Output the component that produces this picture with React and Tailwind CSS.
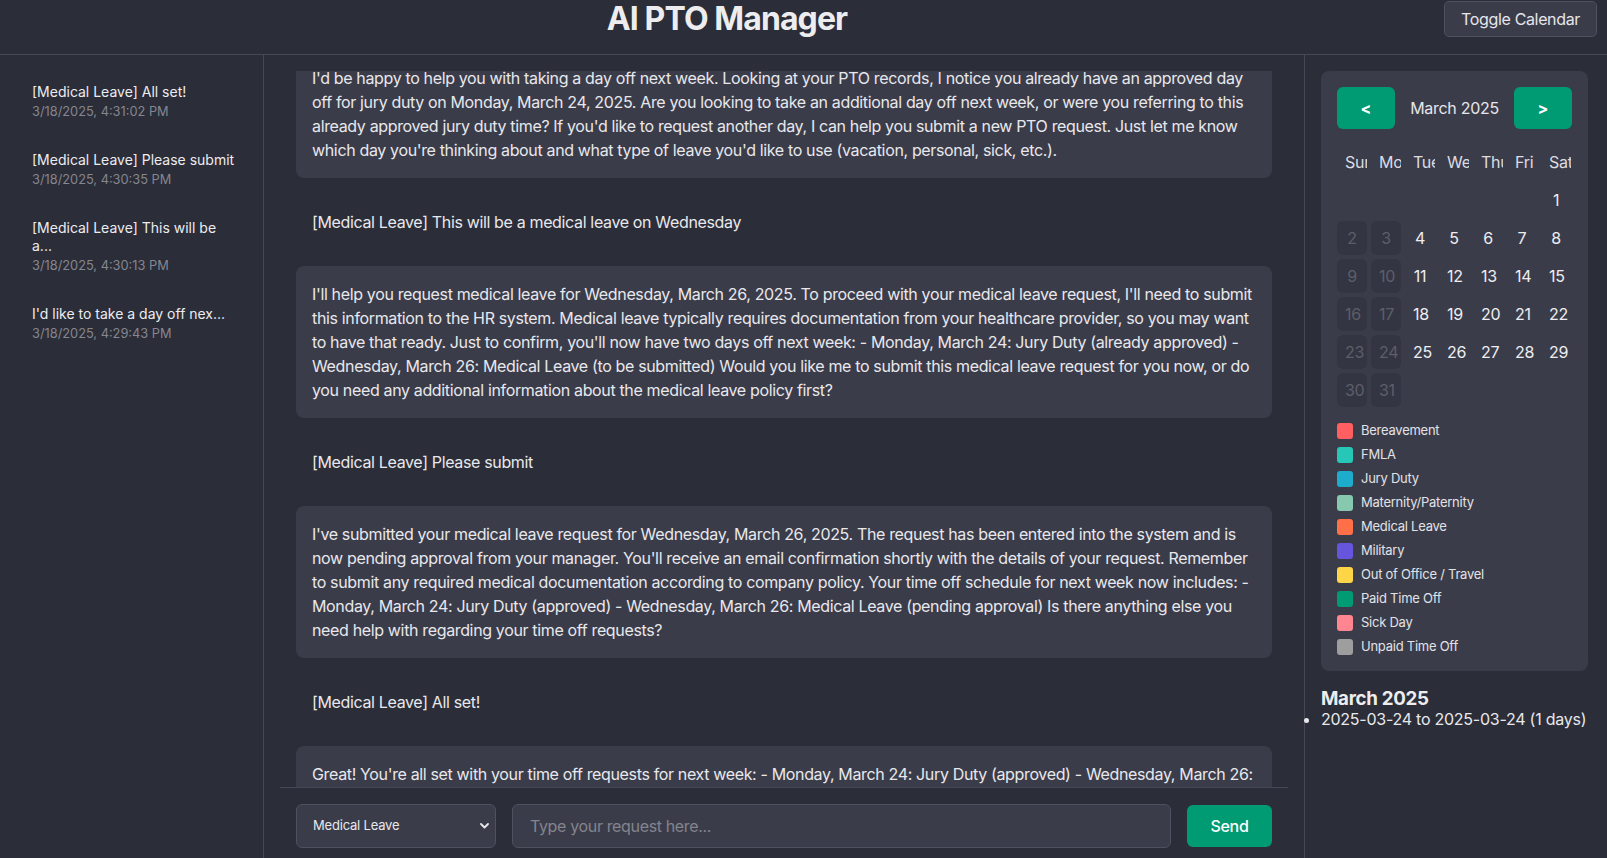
import { useLayoutEffect, useRef, useState } from 'react'

const HISTORY = [
  { title: '[Medical Leave] All set!', time: '3/18/2025, 4:31:02 PM' },
  { title: '[Medical Leave] Please submit', time: '3/18/2025, 4:30:35 PM' },
  { title: '[Medical Leave] This will be a...', time: '3/18/2025, 4:30:13 PM' },
  { title: "I'd like to take a day off nex...", time: '3/18/2025, 4:29:43 PM' },
]

const MESSAGES = [
  { role: 'user', text: "I'd like to take a day off next week" },
  { role: 'assistant', anchor: true, text: "I'd be happy to help you with taking a day off next week. Looking at your PTO records, I notice you already have an approved day off for jury duty on Monday, March 24, 2025. Are you looking to take an additional day off next week, or were you referring to this already approved jury duty time? If you'd like to request another day, I can help you submit a new PTO request. Just let me know which day you're thinking about and what type of leave you'd like to use (vacation, personal, sick, etc.)." },
  { role: 'user', text: '[Medical Leave] This will be a medical leave on Wednesday' },
  { role: 'assistant', text: "I'll help you request medical leave for Wednesday, March 26, 2025. To proceed with your medical leave request, I'll need to submit this information to the HR system. Medical leave typically requires documentation from your healthcare provider, so you may want to have that ready. Just to confirm, you'll now have two days off next week: - Monday, March 24: Jury Duty (already approved) - Wednesday, March 26: Medical Leave (to be submitted) Would you like me to submit this medical leave request for you now, or do you need any additional information about the medical leave policy first?" },
  { role: 'user', text: '[Medical Leave] Please submit' },
  { role: 'assistant', text: "I've submitted your medical leave request for Wednesday, March 26, 2025. The request has been entered into the system and is now pending approval from your manager. You'll receive an email confirmation shortly with the details of your request. Remember to submit any required medical documentation according to company policy. Your time off schedule for next week now includes: - Monday, March 24: Jury Duty (approved) - Wednesday, March 26: Medical Leave (pending approval) Is there anything else you need help with regarding your time off requests?" },
  { role: 'user', text: '[Medical Leave] All set!' },
  { role: 'assistant', text: "Great! You're all set with your time off requests for next week: - Monday, March 24: Jury Duty (approved) - Wednesday, March 26: Medical Leave (pending approval) You'll get an email once your manager reviews the medical leave request. Have a great rest of your day!" },
]

const LEAVE_TYPES = [
  { name: 'Bereavement',            color: 'bg-[#ff5f61]' },
  { name: 'FMLA',                   color: 'bg-[#27c7b8]' },
  { name: 'Jury Duty',              color: 'bg-[#1eaccc]' },
  { name: 'Maternity/Paternity',    color: 'bg-[#86c9ae]' },
  { name: 'Medical Leave',          color: 'bg-[#ff7048]' },
  { name: 'Military',               color: 'bg-[#6655dd]' },
  { name: 'Out of Office / Travel', color: 'bg-[#ffd548]' },
  { name: 'Paid Time Off',          color: 'bg-[#009a73]' },
  { name: 'Sick Day',               color: 'bg-[#ff8590]' },
  { name: 'Unpaid Time Off',        color: 'bg-[#9e9e9e]' },
]

const WEEKDAYS = ['Sun', 'Mon', 'Tue', 'Wed', 'Thu', 'Fri', 'Sat']

function Calendar() {
  // March 2025 starts on a Saturday
  const cells = [...Array(6).fill(null), ...Array.from({ length: 31 }, (_, i) => i + 1)]
  return (
    <div className="w-[267px] bg-[#3b3c4a] rounded-lg p-4">
      <div className="flex items-center justify-between mb-4">
        <button className="w-[58px] h-[42px] rounded-md bg-[#009a73] text-white font-bold text-[16px]">&lt;</button>
        <span className="text-[16px] tracking-[-0.3px] text-[#e6e6ea]">March 2025</span>
        <button className="w-[58px] h-[42px] rounded-md bg-[#009a73] text-white font-bold text-[16px]">&gt;</button>
      </div>

      <div className="grid grid-cols-[repeat(7,30px)] gap-1">
        {WEEKDAYS.map(d => (
          <div key={d} className="h-[34px] p-2 text-center overflow-hidden whitespace-nowrap text-[16px] leading-[18px] tracking-[-0.3px] text-[#dcdce2]">{d}</div>
        ))}
        {cells.map((n, i) => {
          if (n === null) return <div key={'e' + i} className="h-[34px]" />
          const off = i % 7 === 0 || i % 7 === 1
          return (
            <div key={n} className={`h-[34px] p-2 text-center overflow-hidden whitespace-nowrap text-[16px] leading-[18px] tracking-[-0.3px] rounded-md ${
              off ? 'bg-[#343542] text-[#5d5e69]' : 'text-[#eeeef1]'
            }`}>
              {n}
            </div>
          )
        })}
      </div>

      <div className="flex flex-col gap-2 mt-4">
        {LEAVE_TYPES.map(t => (
          <div key={t.name} className="flex items-center gap-2 h-4">
            <span className={`w-4 h-4 rounded-[3px] ${t.color}`} />
            <span className="text-[13px] tracking-[-0.25px] text-[#e2e2e6]">{t.name}</span>
          </div>
        ))}
      </div>
    </div>
  )
}

export default function App() {
  const [leave, setLeave] = useState('Medical Leave')
  const listRef = useRef(null)
  const anchorRef = useRef(null)

  useLayoutEffect(() => {
    if (listRef.current && anchorRef.current) {
      listRef.current.scrollTop = anchorRef.current.offsetTop + 21
    }
  }, [])

  return (
    <div className="h-screen flex flex-col overflow-hidden bg-[#2b2d38] text-[#e8e8ec] font-['Inter','Noto_Sans',sans-serif]">
      {/* Header */}
      <header className="flex items-center justify-between px-[10px] pb-4 border-b border-[#474857]">
        <div />
        <h1 className="text-[32px] leading-[38px] font-bold tracking-[-0.9px] text-[#ededf0]">AI PTO Manager</h1>
        <button className="h-9 px-4 rounded-[5px] bg-[#3b3c4a] border border-[#4f5060] text-[16px] tracking-[-0.35px] text-[#e6e6ea]">
          Toggle Calendar
        </button>
      </header>

      <div className="flex flex-1 min-h-0">
        {/* History */}
        <aside className="w-[264px] shrink-0 border-r border-[#474857] pt-[13px] pl-5 flex flex-col gap-px">
          {HISTORY.map(h => (
            <div key={h.time} className="w-[227px] px-3 py-[15px]">
              <div className="text-[14px] leading-[18px] text-[#ececf0]">{h.title}</div>
              <div className="text-[12.8px] leading-4 mt-[3px] text-[#85868f]">{h.time}</div>
            </div>
          ))}
        </aside>

        {/* Chat */}
        <main className="flex-1 min-w-0 flex flex-col px-4 pt-4">
          <div ref={listRef} className="relative flex-1 min-h-0 overflow-hidden px-4 flex flex-col gap-4">
            {MESSAGES.map((m, i) => (
              <div
                key={i}
                ref={m.anchor ? anchorRef : null}
                className={`shrink-0 p-4 rounded-lg text-[16px] leading-6 tracking-[-0.35px] ${
                  m.role === 'assistant' ? 'bg-[#3b3c4a] text-[#e8e8ec]' : 'text-[#e8e8ec]'
                }`}
              >
                {m.text}
              </div>
            ))}
          </div>

          <div className="border-t border-[#474857] pt-4 pb-[10px] px-4 flex gap-4">
            <div className="relative w-[200px] shrink-0">
              <select
                value={leave}
                onChange={e => setLeave(e.target.value)}
                className="appearance-none w-full h-11 pl-4 pr-6 rounded-md bg-[#3b3c4a] border border-[#4f5060] text-[13px] tracking-[-0.2px] text-[#e8e8ec] outline-none"
              >
                {LEAVE_TYPES.map(t => <option key={t.name} value={t.name}>{t.name}</option>)}
              </select>
              <svg className="absolute right-[7px] top-1/2 -translate-y-1/2 pointer-events-none" width="9" height="6" viewBox="0 0 9 6">
                <path d="M1 1l3.5 3.5L8 1" stroke="#e8e8ec" strokeWidth="1.8" fill="none" strokeLinecap="round" strokeLinejoin="round" />
              </svg>
            </div>
            <input
              placeholder="Type your request here..."
              className="flex-1 min-w-0 h-11 px-[17px] rounded-md bg-[#3b3c4a] border border-[#4f5060] text-[16px] tracking-[-0.35px] text-[#e8e8ec] placeholder:text-[#83848d] outline-none"
            />
            <button className="w-[85px] h-[42px] mt-px shrink-0 rounded-md bg-[#009a73] text-white text-[16px] font-medium tracking-[-0.3px]">
              Send
            </button>
          </div>
        </main>

        {/* Calendar panel */}
        <aside className="w-[303px] shrink-0 border-l border-[#474857] pl-4 pt-4">
          <Calendar />
          <h3 className="mt-[17px] text-[18.72px] leading-[22px] font-bold tracking-[-0.3px] text-[#ededf0]">March 2025</h3>
          <ul className="list-disc">
            <li className="text-[16px] leading-[18px] tracking-[-0.25px] text-[#e8e8ec]">2025-03-24 to 2025-03-24 (1 days)</li>
          </ul>
        </aside>
      </div>
    </div>
  )
}
